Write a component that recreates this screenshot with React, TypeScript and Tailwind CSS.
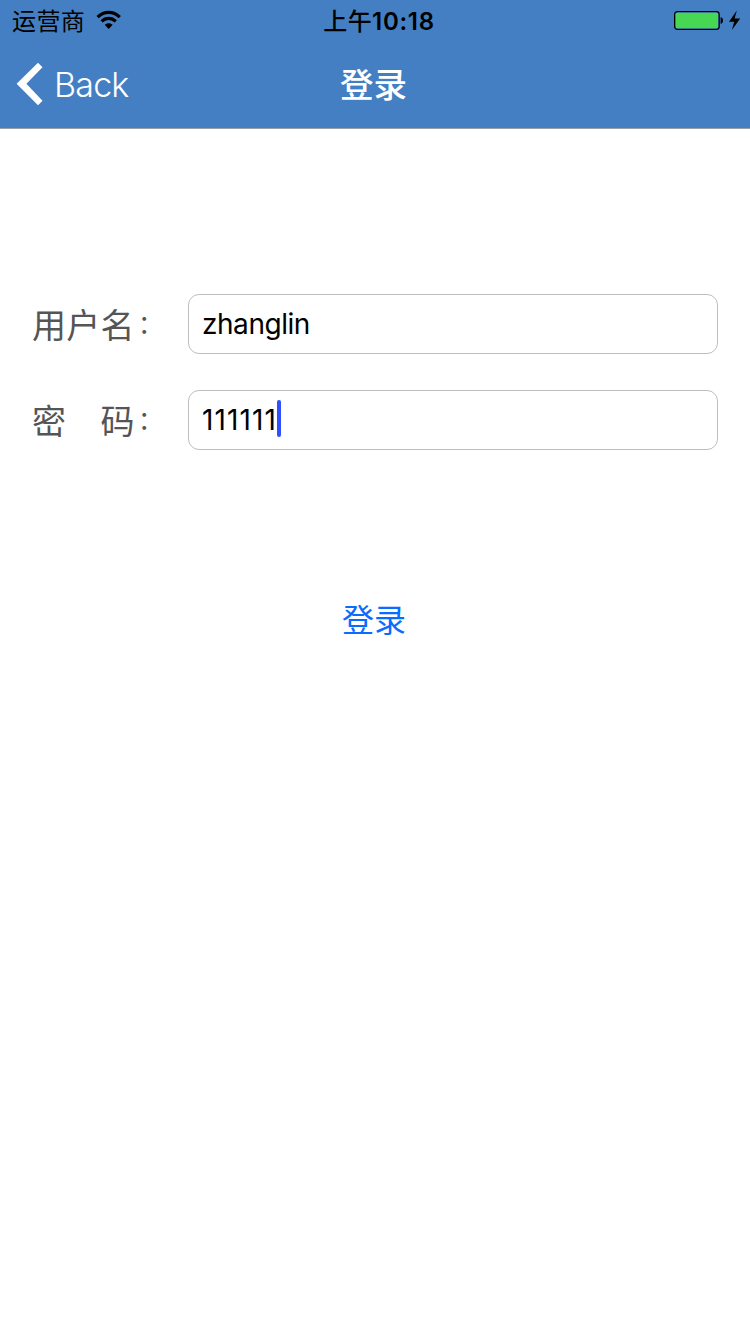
function StatusBar() {
  return (
    <div className="grid h-10 grid-cols-3 text-black">
      <div className="flex items-center pl-3">
        <span className="w-[84px] whitespace-nowrap pt-[3px] text-[24px] leading-[37px] tracking-[0.4px]">运营商</span>
        <svg width="26" height="20" viewBox="0 0 26 20" fill="none" className="block">
          <path d="M1.6 7.2C8 .8 17.4 .8 23.8 7.2" stroke="black" strokeWidth="3.2" />
          <path d="M5.6 11.4c4.2-4 10-4 14.2 0" stroke="black" strokeWidth="3.1" />
          <path d="M12.7 19l-4-4.2c2.2-2.1 5.8-2.1 8 0z" fill="black" />
        </svg>
      </div>
      <div className="flex items-center justify-center whitespace-nowrap pl-2 pt-[3px] leading-[37px]">
        <span className="text-[24px] font-medium tracking-[0.4px]">上午</span>
        <span className="text-[24px] font-semibold tracking-[0.7px]">10:18</span>
      </div>
      <div className="flex items-center justify-end pr-[9px]">
        <svg width="68" height="24" viewBox="0 0 68 24" className="block">
          <rect x="1.6" y="3.6" width="44.6" height="17.8" rx="2.8" fill="none" stroke="black" strokeWidth="1.2" />
          <rect x="2.8" y="4.8" width="42.2" height="15.4" rx="1.5" fill="#46d753" />
          <path d="M47.6 9.2c3.2 0 3.2 6.6 0 6.6z" fill="black" />
          <path d="M63.8 2.5L56 13.8h5.2l-2.3 8.3 8.3-11.5h-5.6z" fill="black" />
        </svg>
      </div>
    </div>
  );
}

function NavBar() {
  return (
    <div className="grid h-[89px] grid-cols-3 border-b border-[#9a9fa5] text-white">
      <div className="flex items-center pl-4">
        <svg width="27" height="44" viewBox="0 0 27 44" className="block">
          <path d="M22 .7L.6 21.8 22 43.2l4.5-4.5L10.4 21.8 26.5 5.2z" fill="white" />
        </svg>
        <span className="pl-[11px] text-[34px] font-light tracking-[-0.8px]">Back</span>
      </div>
      <h1 className="flex items-center justify-center pr-[3px] pt-[3px] text-[33.5px] font-medium">登录</h1>
    </div>
  );
}

function FieldLabel({ text }: { text: string }) {
  return (
    <span className="flex w-[156px] items-center whitespace-pre text-[#555555]">
      <span className="pt-0.5 text-[34px] tracking-[0.3px]">{text}</span>
      <span className="pl-[3px] pt-0.5 text-[25px]">：</span>
    </span>
  );
}

const inputBox =
  "flex h-[60px] grow items-center rounded-[11px] border border-[#bfbfbf] pl-[13px] text-[28px] text-black";

export default function App() {
  return (
    <div className="min-h-[1334px] w-[750px] bg-white font-[Inter,'Noto_Sans_CJK_SC',sans-serif]">
      <header className="h-[129px] bg-[#437fc2]">
        <StatusBar />
        <NavBar />
      </header>
      <main className="flex flex-col gap-9 pt-[165px]">
        <label className="flex h-[60px] items-center px-8">
          <FieldLabel text="用户名" />
          <span className={inputBox}>
            <span className="tracking-[-0.45px]">zhanglin</span>
          </span>
        </label>
        <label className="flex h-[60px] items-center px-8">
          <FieldLabel text="密　码" />
          <span className={inputBox}>
            <span className="tracking-[1.1px]">111111</span>
            <span className="mb-[3px] h-[37px] w-1 rounded-sm bg-[#304ffe]" />
          </span>
        </label>
        <button className="mr-0.5 mt-[105px] h-[60px] self-center text-[32px] text-[#0a6cff]">登录</button>
      </main>
    </div>
  );
}
